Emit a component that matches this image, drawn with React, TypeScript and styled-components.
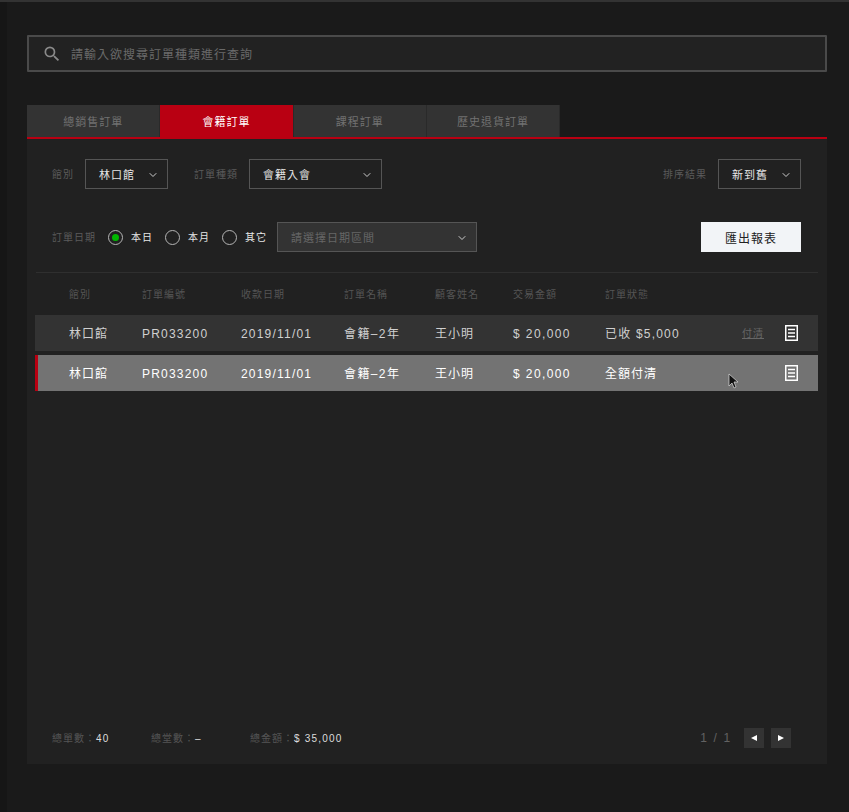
import React from 'react';
import styled, { createGlobalStyle } from 'styled-components';
import { ChevronDown } from 'lucide-react';

const GlobalStyle = createGlobalStyle`
  html, body {
    margin: 0;
    padding: 0;
    background: #1a1a1a;
  }
  * {
    box-sizing: border-box;
  }
`;

const Page = styled.div`
  position: relative;
  width: 849px;
  height: 812px;
  overflow: hidden;
  padding: 35px 22px 0 27px;
  background: #1a1a1a;
  border-top: 2px solid #333;
  font-family: "Liberation Sans", "Noto Sans CJK TC", sans-serif;
  line-height: 16px;
  color: #fff;
  &::before {
    content: '';
    position: absolute;
    left: 0;
    top: 0;
    bottom: 0;
    width: 7px;
    background: #161616;
  }
`;

const SearchBar = styled.div`
  display: flex;
  align-items: center;
  gap: 9px;
  height: 37px;
  margin-top: -2px;
  padding-left: 13px;
  background: #222;
  border: 2px solid #4a4a4a;
  border-radius: 1px;
  color: #6a6a6a;
  font-size: 12px;
  letter-spacing: 1px;
`;

const SearchText = styled.span`
  padding-top: 2px;
`;

const TabBar = styled.div`
  display: flex;
  margin-top: 33px;
  height: 34px;
  border-bottom: 2px solid #b90012;
`;

const Tab = styled.div<{ $active?: boolean }>`
  display: flex;
  align-items: center;
  justify-content: center;
  width: 133.3px;
  height: 32px;
  padding-top: 2px;
  background: ${p => (p.$active ? '#b90012' : '#333')};
  border-right: 1px solid #2a2a2a;
  color: ${p => (p.$active ? '#fff' : '#717171')};
  font-size: 11px;
  letter-spacing: 1px;
`;

const Panel = styled.div`
  height: 625px;
  display: flex;
  flex-direction: column;
  background: #212121;
`;

const FilterRow = styled.div<{ $top: number }>`
  display: flex;
  align-items: center;
  height: 30px;
  margin-top: ${p => p.$top}px;
  padding: 0 26px 0 25px;
`;

const FieldLabel = styled.span`
  margin-right: 11px;
  padding-top: 2px;
  color: #5b5b5b;
  font-size: 10px;
  letter-spacing: 1px;
  white-space: nowrap;
`;

const Select = styled.div<{ $width: number; $disabled?: boolean }>`
  display: flex;
  align-items: center;
  justify-content: space-between;
  width: ${p => p.$width}px;
  height: 30px;
  padding: 2px 8px 0 13px;
  background: ${p => (p.$disabled ? '#333' : 'transparent')};
  border: 1px solid #555;
  color: ${p => (p.$disabled ? '#666' : '#e6e6e6')};
  font-size: 11px;
  letter-spacing: 1px;
  svg {
    color: #ccc;
  }
`;

const Spacer = styled.div`
  flex: 1;
`;

const FieldGap = styled.div`
  width: 26px;
`;

const RadioItem = styled.label<{ $gap?: number }>`
  display: flex;
  align-items: center;
  gap: 8px;
  margin-right: ${p => p.$gap ?? 12}px;
  color: #e6e6e6;
  font-size: 10px;
  letter-spacing: 1px;
`;

const RadioText = styled.span`
  padding-top: 2px;
`;

const RadioCircle = styled.span<{ $checked?: boolean }>`
  display: flex;
  align-items: center;
  justify-content: center;
  width: 15px;
  height: 15px;
  border: 1px solid #b5b5b5;
  border-radius: 50%;
  &::after {
    content: '';
    display: ${p => (p.$checked ? 'block' : 'none')};
    width: 7px;
    height: 7px;
    border-radius: 50%;
    background: #00b800;
  }
`;

const RadioGroup = styled.div`
  display: flex;
  align-items: center;
  margin-left: 1px;
`;

const ExportButton = styled.button`
  width: 100px;
  height: 30px;
  padding: 0;
  background: #f2f4f7;
  border: 0;
  color: #222;
  font-family: inherit;
  font-size: 12px;
  font-weight: 400;
  letter-spacing: 1px;
`;

const Divider = styled.div`
  height: 1px;
  margin: 20px 9px 0;
  background: #2f2f2f;
`;

const columns = '73px 99px 103px 91px 78px 92px 137px 43px 1fr';

const HeadRow = styled.div`
  display: grid;
  grid-template-columns: ${columns};
  align-items: center;
  height: 42px;
  margin: 0 9px;
  padding: 2px 0 0 33px;
  color: #555;
  font-size: 10px;
  letter-spacing: 1px;
`;

const Row = styled.div<{ $selected?: boolean }>`
  display: grid;
  grid-template-columns: ${columns};
  align-items: center;
  height: 36px;
  margin: 0 9px 4px 8px;
  padding: 2px 0 0 ${p => (p.$selected ? 31 : 34)}px;
  background: ${p => (p.$selected ? '#737373' : '#333')};
  border-left: ${p => (p.$selected ? '3px solid #b90012' : '0')};
  color: ${p => (p.$selected ? '#fff' : '#d0d0d0')};
  font-size: 12px;
  letter-spacing: 1px;
  white-space: nowrap;
`;

const Latin = styled.span<{ $tight?: boolean }>`
  letter-spacing: ${p => (p.$tight ? 1.2 : 1.4)}px;
`;

const PayLink = styled.a`
  color: #666;
  font-size: 10px;
  text-decoration: underline;
`;

const DocIcon = styled.svg`
  display: block;
  justify-self: end;
  margin: -2px 20px 0 0;
`;

const Footer = styled.div`
  display: flex;
  align-items: center;
  margin-top: auto;
  height: 24px;
  margin-bottom: 14px;
  padding: 0 36px 0 25px;
`;

const Stat = styled.div<{ $width: number }>`
  width: ${p => p.$width}px;
  padding-top: 2px;
  color: #555;
  font-size: 10px;
  letter-spacing: 1px;
  b {
    color: #ddd;
    font-weight: 400;
    letter-spacing: 1.2px;
  }
`;

const PageText = styled.span`
  margin-right: 12px;
  color: #626262;
  font-size: 12px;
  letter-spacing: 1.7px;
`;

const PageButton = styled.button`
  display: flex;
  align-items: center;
  justify-content: center;
  width: 20px;
  height: 20px;
  margin-left: 7px;
  padding: 0;
  background: #333;
  border: 0;
  &:first-of-type {
    margin-left: 0;
  }
`;

const Cursor = styled.svg`
  position: absolute;
  left: 728px;
  top: 371px;
`;

const Doc = () => (
  <DocIcon width="13" height="16" viewBox="0 0 13 16" fill="none" stroke="#fff">
    <rect x="0.75" y="0.75" width="11.5" height="14.5" strokeWidth="1.5" />
    <path d="M3 4.5h7M3 8h7M3 11.5h7" strokeWidth="1.5" />
  </DocIcon>
);

const OrderCells = () => (
  <>
    <span>林口館</span>
    <Latin $tight>PR033200</Latin>
    <Latin $tight>2019/11/01</Latin>
    <Latin>會籍–2年</Latin>
    <span>王小明</span>
    <Latin>$ 20,000</Latin>
  </>
);

const App: React.FC = () => (
  <>
    <GlobalStyle />
    <Page>
      <SearchBar>
        <svg width="20" height="20" viewBox="0 0 24 24" fill="#8a8a8a">
          <path d="M15.5 14h-.79l-.28-.27A6.47 6.47 0 0 0 16 9.5 6.5 6.5 0 1 0 9.5 16c1.61 0 3.09-.59 4.23-1.57l.27.28v.79l5 4.99L20.49 19l-4.99-5zm-6 0C7.01 14 5 11.99 5 9.5S7.01 5 9.5 5 14 7.01 14 9.5 11.99 14 9.5 14z" />
        </svg>
        <SearchText>請輸入欲搜尋訂單種類進行查詢</SearchText>
      </SearchBar>
      <TabBar>
        <Tab>總銷售訂單</Tab>
        <Tab $active>會籍訂單</Tab>
        <Tab>課程訂單</Tab>
        <Tab>歷史退貨訂單</Tab>
      </TabBar>
      <Panel>
        <FilterRow $top={20}>
          <FieldLabel>館別</FieldLabel>
          <Select $width={83}>
            林口館
            <ChevronDown size={12} />
          </Select>
          <FieldGap />
          <FieldLabel>訂單種類</FieldLabel>
          <Select $width={133}>
            會籍入會
            <ChevronDown size={12} />
          </Select>
          <Spacer />
          <FieldLabel>排序結果</FieldLabel>
          <Select $width={83}>
            新到舊
            <ChevronDown size={12} />
          </Select>
        </FilterRow>
        <FilterRow $top={33}>
          <FieldLabel>訂單日期</FieldLabel>
          <RadioGroup>
            <RadioItem>
              <RadioCircle $checked />
              <RadioText>本日</RadioText>
            </RadioItem>
            <RadioItem>
              <RadioCircle />
              <RadioText>本月</RadioText>
            </RadioItem>
            <RadioItem $gap={10}>
              <RadioCircle />
              <RadioText>其它</RadioText>
            </RadioItem>
          </RadioGroup>
          <Select $width={200} $disabled>
            請選擇日期區間
            <ChevronDown size={12} />
          </Select>
          <Spacer />
          <ExportButton>匯出報表</ExportButton>
        </FilterRow>
        <Divider />
        <HeadRow>
          <span>館別</span>
          <span>訂單編號</span>
          <span>收款日期</span>
          <span>訂單名稱</span>
          <span>顧客姓名</span>
          <span>交易金額</span>
          <span>訂單狀態</span>
        </HeadRow>
        <Row>
          <OrderCells />
          <Latin $tight>已收 $5,000</Latin>
          <PayLink>付清</PayLink>
          <Doc />
        </Row>
        <Row $selected>
          <OrderCells />
          <span>全額付清</span>
          <span />
          <Doc />
        </Row>
        <Footer>
          <Stat $width={99}>
            總單數：<b>40</b>
          </Stat>
          <Stat $width={99}>
            總堂數：<b>–</b>
          </Stat>
          <Stat $width={110}>
            總金額：<b>$ 35,000</b>
          </Stat>
          <Spacer />
          <PageText>1 / 1</PageText>
          <PageButton>
            <svg width="6" height="6" viewBox="0 0 7 7">
              <path d="M0 3.5 7 0v7z" fill="#fff" />
            </svg>
          </PageButton>
          <PageButton>
            <svg width="6" height="6" viewBox="0 0 7 7">
              <path d="M7 3.5 0 0v7z" fill="#fff" />
            </svg>
          </PageButton>
        </Footer>
      </Panel>
      <Cursor width="11" height="17" viewBox="0 0 11 17">
        <path d="M1 1v12l3-3 2 5 2-1-2-5h4z" fill="#111" stroke="#ddd" strokeWidth="0.7" />
      </Cursor>
    </Page>
  </>
);

export default App;
